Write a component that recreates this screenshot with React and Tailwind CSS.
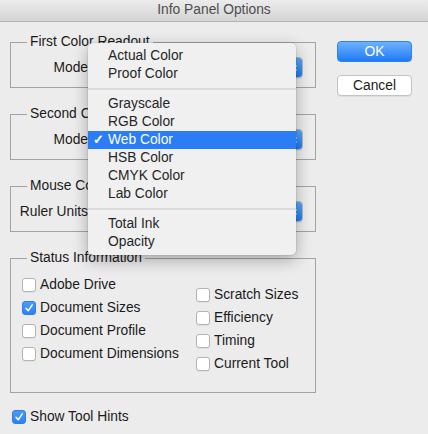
import React from 'react';

const font = { fontFamily: '"Liberation Sans", Arial, sans-serif' };

function Stepper() {
  return (
    <svg width="8" height="12" viewBox="0 0 8 12" fill="none" stroke="white" strokeWidth="1.4">
      <path d="M1.5 4.5 L4 2 L6.5 4.5" />
      <path d="M1.5 7.5 L4 10 L6.5 7.5" />
    </svg>
  );
}

function Popup({ label }) {
  return (
    <div className="flex items-center mt-[7px]">
      <div className="w-[77px] text-right text-[13.8px] leading-[16px] text-[#1a1a1a] whitespace-nowrap">{label}</div>
      <div className="ml-[3px] w-[212px] h-[21px] flex rounded-[4px] border border-[#b9b9b9] bg-white shadow-[0_1px_0_rgba(0,0,0,0.08)] overflow-hidden">
        <div className="flex-1" />
        <div className="w-[17px] flex items-center justify-center bg-gradient-to-b from-[#5aa8fa] to-[#1a78f3]">
          <Stepper />
        </div>
      </div>
    </div>
  );
}

function Group({ title, className = '', children }) {
  return (
    <div className={`border border-[#a3a3a3] ${className}`}>
      <div className="-mt-[9px] ml-[16px] px-[3px] w-fit bg-[#ececec] text-[13.8px] leading-[16px] text-[#1a1a1a]">
        {title}
      </div>
      {children}
    </div>
  );
}

function Checkbox({ checked, label }) {
  return (
    <div className="flex items-center h-[14px]">
      {checked ? (
        <div className="w-[14px] h-[14px] rounded-[3px] bg-gradient-to-b from-[#4d9bf8] to-[#2a82f4] border border-[#2f7fe6] flex items-center justify-center">
          <svg width="10" height="10" viewBox="0 0 10 10" fill="none" stroke="white" strokeWidth="1.5" strokeLinecap="round" strokeLinejoin="round">
            <path d="M2 5.2 L4.2 7.8 L8.2 1.8" />
          </svg>
        </div>
      ) : (
        <div className="w-[14px] h-[14px] rounded-[3px] bg-white border border-[#b3b3b3] shadow-[0_1px_0_rgba(0,0,0,0.05)]" />
      )}
      <span className="ml-[4px] text-[13.8px] leading-[14px] text-[#1a1a1a] whitespace-nowrap">{label}</span>
    </div>
  );
}

function MenuItem({ children, selected }) {
  return (
    <div className={`h-[18px] flex items-center text-[13.8px] ${selected ? 'bg-[#2a7df4] text-white' : 'text-[#262626]'}`}>
      <span className="w-[20px] pl-[5px] text-[13px] font-bold">{selected ? '✓' : ''}</span>
      <span>{children}</span>
    </div>
  );
}

function Separator() {
  return (
    <div className="h-[12px] flex items-center">
      <div className="w-full h-[2px] bg-[#dadada]" />
    </div>
  );
}

export default function App() {
  return (
    <div className="relative w-[428px] h-[434px] bg-[#ececec] overflow-hidden" style={font}>
      <div className="h-[22px] flex items-center justify-center bg-gradient-to-b from-[#ececec] to-[#d4d4d4] border-b border-[#b3b3b3] text-[13.8px] text-[#4d4d4d]">
        Info Panel Options
      </div>

      <div className="flex items-start">
        <div className="ml-[10px] mt-[20px] w-[306px]">
          <Group title="First Color Readout" className="h-[46px]">
            <Popup label="Mode" />
          </Group>
          <Group title="Second Color Readout" className="h-[46px] mt-[26px]">
            <Popup label="Mode" />
          </Group>
          <Group title="Mouse Coordinates" className="h-[46px] mt-[26px]">
            <Popup label="Ruler Units" />
          </Group>
          <Group title="Status Information" className="h-[135px] mt-[26px]">
            <div className="flex">
              <div className="w-[185px] pl-[11px] mt-[12px] flex flex-col gap-[9px]">
                <Checkbox label="Adobe Drive" />
                <Checkbox label="Document Sizes" checked />
                <Checkbox label="Document Profile" />
                <Checkbox label="Document Dimensions" />
              </div>
              <div className="mt-[22px] flex flex-col gap-[9px]">
                <Checkbox label="Scratch Sizes" />
                <Checkbox label="Efficiency" />
                <Checkbox label="Timing" />
                <Checkbox label="Current Tool" />
              </div>
            </div>
          </Group>
          <div className="mt-[17px] ml-[2px]">
            <Checkbox label="Show Tool Hints" checked />
          </div>
        </div>

        <div className="ml-[21px] mt-[19px] flex flex-col gap-[13px]">
          <button className="w-[75px] h-[21px] rounded-[4px] bg-gradient-to-b from-[#6cb1fb] to-[#1a7bf6] border border-[#2f82ef] text-white text-[13.8px] leading-[19px]">
            OK
          </button>
          <button className="w-[75px] h-[21px] rounded-[4px] bg-white border border-[#c3c3c3] shadow-[0_1px_0_rgba(0,0,0,0.06)] text-[#1a1a1a] text-[13.8px] leading-[19px]">
            Cancel
          </button>
        </div>
      </div>

      <div className="absolute left-[88px] top-[43px] w-[208px] py-[4px] rounded-[5px] bg-[#f0f0f0] shadow-[0_5px_16px_rgba(0,0,0,0.3),0_0_0_1px_rgba(0,0,0,0.06)]">
        <MenuItem>Actual Color</MenuItem>
        <MenuItem>Proof Color</MenuItem>
        <Separator />
        <MenuItem>Grayscale</MenuItem>
        <MenuItem>RGB Color</MenuItem>
        <MenuItem selected>Web Color</MenuItem>
        <MenuItem>HSB Color</MenuItem>
        <MenuItem>CMYK Color</MenuItem>
        <MenuItem>Lab Color</MenuItem>
        <Separator />
        <MenuItem>Total Ink</MenuItem>
        <MenuItem>Opacity</MenuItem>
      </div>
    </div>
  );
}
